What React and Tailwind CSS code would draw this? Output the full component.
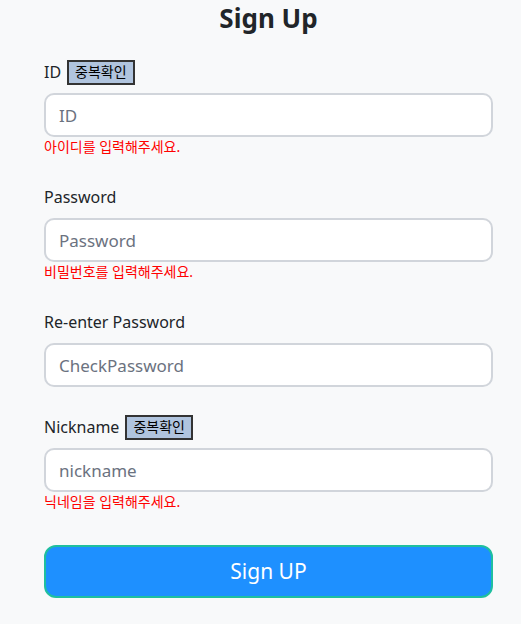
const DupButton = () => (
  <button className="ml-[6px] h-[25px] px-[6px] border-2 border-[#333] bg-[#b0c4de] text-[14px] leading-none text-black">
    중복확인
  </button>
);

const Field = ({ label, placeholder, error, dup, type = "text" }) => (
  <div className="flex flex-col">
    <div className="flex items-center h-[26px] text-[16px] text-[#212529]">
      <span>{label}</span>
      {dup && <DupButton />}
    </div>
    <input
      type={type}
      placeholder={placeholder}
      className="mt-[8px] h-[44px] w-full rounded-[10px] border-2 border-[#d1d5db] bg-white px-[13px] text-[17px] placeholder:text-[#6b7280] outline-none"
    />
    {error && <div className="h-[20px] text-[14px] leading-[20px] text-[#ff0000]">{error}</div>}
  </div>
);

export default function App() {
  return (
    <div
      className="min-h-[624px] bg-[#f8f9fa] pl-[44px] pr-[28px]"
      style={{ fontFamily: '"Noto Sans", "Noto Sans CJK KR", sans-serif' }}
    >
      <h1 className="pt-[1px] text-center text-[26px] font-bold leading-[34px] text-[#212529]">Sign Up</h1>
      <div className="mt-[24px] flex flex-col gap-[27px]">
        <Field label="ID" placeholder="ID" error="아이디를 입력해주세요." dup />
        <Field label="Password" placeholder="Password" error="비밀번호를 입력해주세요." type="password" />
        <Field label="Re-enter Password" placeholder="CheckPassword" type="password" />
        <Field label="Nickname" placeholder="nickname" error="닉네임을 입력해주세요." dup />
      </div>
      <button className="mt-[33px] h-[53px] w-full rounded-[12px] border-2 border-[#1fbf9f] bg-[#1e90ff] text-[21px] text-white">
        Sign UP
      </button>
    </div>
  );
}
